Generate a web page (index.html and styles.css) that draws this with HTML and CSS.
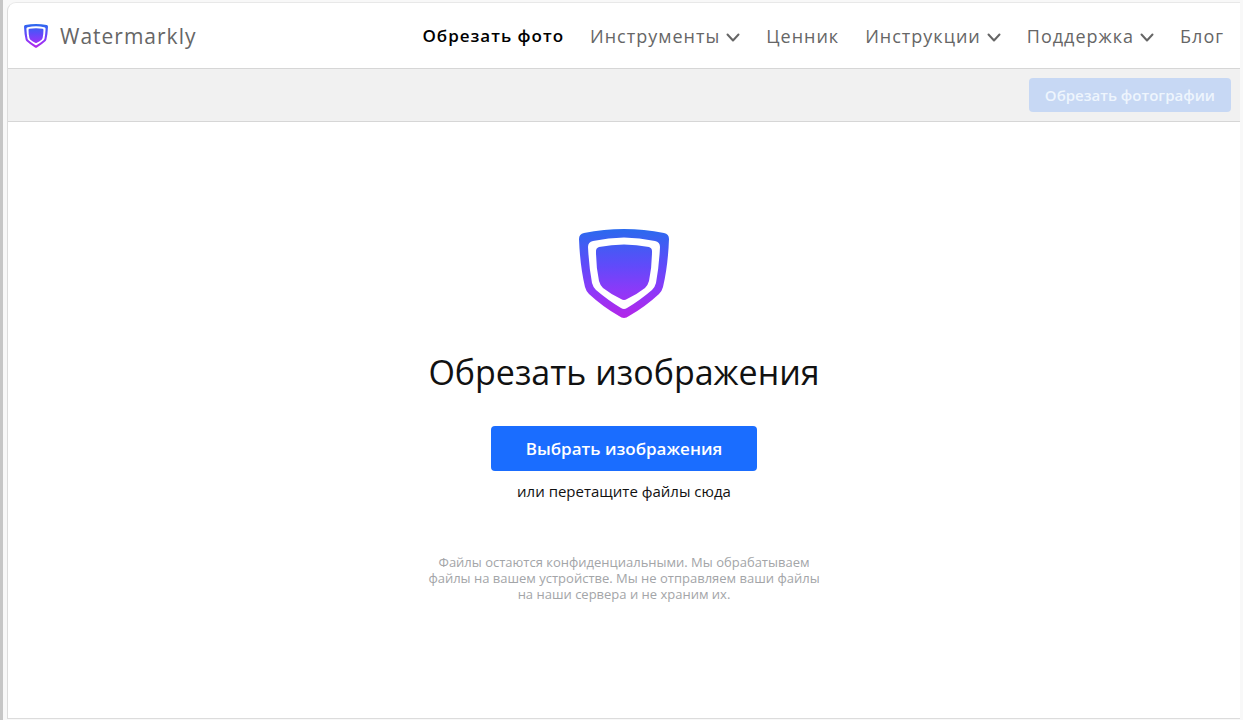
FILE: index.html
```html
<!DOCTYPE html>
<html lang="ru">
<head>
<meta charset="utf-8">
<meta name="viewport" content="width=device-width, initial-scale=1">
<title>Обрезать изображения — Watermarkly</title>
<link rel="stylesheet" href="styles.css">
</head>
<body>
<svg class="defs" width="0" height="0" aria-hidden="true">
  <defs>
    <linearGradient id="shade" x1="0" y1="0" x2="0" y2="90" gradientUnits="userSpaceOnUse">
      <stop offset="0" stop-color="#2a6aee"/>
      <stop offset="0.4" stop-color="#5f4bfa"/>
      <stop offset="0.7" stop-color="#8f38f8"/>
      <stop offset="1" stop-color="#b526e8"/>
    </linearGradient>
    <symbol id="shield" viewBox="0 0 90 90">
      <path fill="url(#shade)" d="M5 4Q45 -4 85 4Q90 5 90 10Q89 37 84 58Q83 62 80 65Q66 78 50 87Q45 91 40 87Q24 78 10 65Q7 62 6 58Q1 37 0 10Q0 5 5 4Z"/>
      <path fill="#fff" d="M14 12Q45 5 76 12Q81 13 81 18Q80 38 77 54Q76 58 73 61Q60 72 48 79Q45 81 42 79Q30 72 17 61Q14 58 13 54Q10 38 9 18Q9 13 14 12Z"/>
      <path fill="url(#shade)" d="M20 18Q45 13 70 18Q73 19 73 22Q73 38 70 52Q69 56 66 59Q57 66 48 70Q45 72 42 70Q33 66 24 59Q21 56 20 52Q17 38 17 22Q17 19 20 18Z"/>
    </symbol>
    <symbol id="chevron" viewBox="0 0 14 9">
      <path fill="none" stroke="currentColor" stroke-width="2" stroke-linecap="round" stroke-linejoin="round" d="M1.5 1.5L7 7.500L12.500 1.500"/>
    </symbol>
  </defs>
</svg>
<div class="window">
  <div class="page">
    <header class="header">
      <a class="brand" href="#"><svg class="brand-logo" aria-hidden="true"><use href="#shield"/></svg>Watermarkly</a>
      <nav class="nav">
        <a class="nav-link nav-link-active" href="#">Обрезать фото</a>
        <a class="nav-link" href="#">Инструменты<svg class="chevron" aria-hidden="true"><use href="#chevron"/></svg></a>
        <a class="nav-link" href="#">Ценник</a>
        <a class="nav-link" href="#">Инструкции<svg class="chevron" aria-hidden="true"><use href="#chevron"/></svg></a>
        <a class="nav-link" href="#">Поддержка<svg class="chevron" aria-hidden="true"><use href="#chevron"/></svg></a>
        <a class="nav-link" href="#">Блог</a>
      </nav>
    </header>
    <div class="toolbar">
      <button class="crop-button" type="button" disabled>Обрезать фотографии</button>
    </div>
    <main class="main">
      <svg class="hero-logo" aria-hidden="true"><use href="#shield"/></svg>
      <h1 class="title">Обрезать изображения</h1>
      <button class="select-button" type="button">Выбрать изображения</button>
      <p class="hint">или перетащите файлы сюда</p>
      <p class="privacy">Файлы остаются конфиденциальными. Мы обрабатываем файлы на вашем устройстве. Мы не отправляем ваши файлы на наши сервера и не храним их.</p>
    </main>
  </div>
</div>
</body>
</html>
```
FILE: styles.css
```css
* {
  box-sizing: border-box;
}

body {
  margin: 0;
  background: #f8f8f8;
  color: #111;
  font-family: "Segoe UI", "Open Sans", "Noto Sans", sans-serif;
}

.defs {
  position: absolute;
}

.window {
  display: flex;
  min-height: 100vh;
  padding: 2px 3px 1px 4px;
  border-left: 3px solid #c6c6c6;
}

.page {
  display: flex;
  flex: 1;
  flex-direction: column;
  border: 1px solid #dcdcdc;
  border-top-color: #e8e8e8;
  border-right: 0;
  border-top-left-radius: 9px;
  background: #fff;
  overflow: hidden;
}

.header {
  display: flex;
  align-items: center;
  justify-content: space-between;
  height: 66px;
  padding: 0 16px;
  border-bottom: 1px solid #d6d6d6;
}

.brand,
.nav-link {
  display: flex;
  align-items: center;
  color: #666;
  font-weight: 500;
  letter-spacing: 1px;
  text-decoration: none;
  white-space: nowrap;
}

.brand {
  gap: 12px;
  font-size: 21px;
}

.brand-logo {
  width: 24px;
  height: 24px;
}

.nav {
  display: flex;
  gap: 26px;
}

.nav-link {
  gap: 6px;
  font-size: 18px;
}

.nav-link-active {
  color: #000;
  font-size: 17px;
  font-weight: 600;
}

.chevron {
  width: 14px;
  height: 9px;
  margin-top: 3px;
}

.toolbar {
  display: flex;
  align-items: center;
  justify-content: flex-end;
  height: 53px;
  padding: 0 9px;
  border-bottom: 1px solid #d6d6d6;
  background: #f1f1f1;
}

.crop-button,
.select-button {
  border: 0;
  border-radius: 4px;
  color: #fff;
  font-family: inherit;
  font-weight: 600;
}

.crop-button {
  height: 34px;
  padding: 0 16px;
  background: #c7d8f4;
  color: #eef5fd;
  font-size: 15px;
}

.main {
  display: flex;
  flex: 1;
  flex-direction: column;
  align-items: center;
  padding: 107px 16px 32px;
  text-align: center;
}

.hero-logo {
  width: 90px;
  height: 90px;
}

.title {
  margin: 28px 0 0;
  font-size: 34px;
  font-weight: 400;
  line-height: 50px;
}

.select-button {
  height: 45px;
  margin-top: 29px;
  padding: 0 35px;
  background: #1a6dff;
  font-size: 17px;
}

.hint {
  margin: 9px 0 0;
  font-size: 15px;
  line-height: 22px;
}

.privacy {
  max-width: 400px;
  margin: 52px 0 0;
  color: #a3a5a8;
  font-size: 13px;
  line-height: 16px;
}
```
